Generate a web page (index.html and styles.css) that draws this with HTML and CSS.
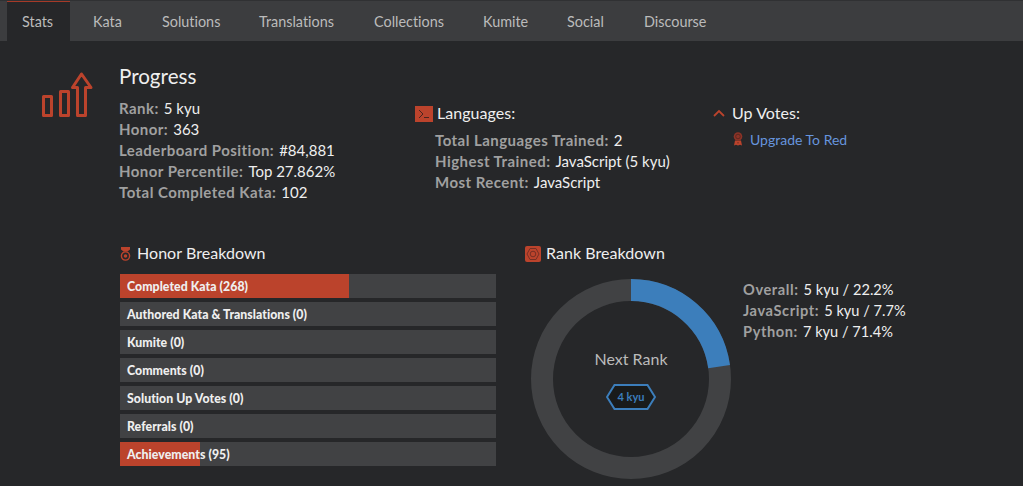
FILE: index.html
```html
<!DOCTYPE html>
<html lang="en">
<head>
<meta charset="utf-8">
<title>Stats</title>
<link rel="stylesheet" href="styles.css">
</head>
<body>
<nav class="tabs">
  <a class="tab active">Stats</a><a class="tab">Kata</a><a class="tab">Solutions</a><a class="tab">Translations</a><a class="tab">Collections</a><a class="tab">Kumite</a><a class="tab">Social</a><a class="tab">Discourse</a>
</nav>
<main class="panel">
  <svg class="progress-icon" width="54" height="48" viewBox="0 0 54 48" fill="none" stroke="#bb432c" stroke-width="3" stroke-linejoin="round">
    <path d="M3.500 26.500h8v19h-8zM20.500 21.500h8v24h-8zM37.500 45.500v-28h-5l9-13.500 9.500 13.500h-5.500v28z"/>
  </svg>
  <div class="content">
    <section class="summary">
      <div class="progress">
        <h2>Progress</h2>
        <div class="stat"><b>Rank:</b>5 kyu</div>
        <div class="stat"><b>Honor:</b>363</div>
        <div class="stat"><b>Leaderboard Position:</b>#84,881</div>
        <div class="stat"><b>Honor Percentile:</b>Top 27.862%</div>
        <div class="stat"><b>Total Completed Kata:</b>102</div>
      </div>
      <div class="languages">
        <h3><svg width="18" height="16" viewBox="0 0 18 16"><path fill="#bb432c" d="M0 0h18v16H0z"/><path fill="none" stroke="#49241f" d="M4 4l4 4-4 4M9 11.500h5"/></svg>Languages:</h3>
        <div class="indent">
          <div class="stat"><b>Total Languages Trained:</b>2</div>
          <div class="stat"><b>Highest Trained:</b>JavaScript (5 kyu)</div>
          <div class="stat"><b>Most Recent:</b>JavaScript</div>
        </div>
      </div>
      <div class="votes">
        <h3><svg width="12" height="8" viewBox="0 0 12 8"><path fill="none" stroke="#bb432c" stroke-width="1.800" d="M1 7l5-5 5 5"/></svg>Up Votes:</h3>
        <a class="upgrade"><svg width="10" height="14" viewBox="0 0 10 14"><path fill="#bb432c" d="M2 8.500h6l1 5-2-.8-2 .8-2-.8-2 .8z"/><circle cx="5" cy="4.500" r="4.300" fill="#8c3327"/><circle cx="5" cy="4.500" r="2.300" fill="none" stroke="#5d2820"/><path stroke="#6a2c22" d="M5 10v1.500"/></svg>Upgrade To Red</a>
      </div>
    </section>
    <section class="breakdowns">
      <div class="honor">
        <h3><svg width="11" height="14" viewBox="0 0 11 14"><path fill="#bb432c" d="M1 0h9v2.500L7.500 4.500h-4L1 2.500z"/><circle cx="5.500" cy="9" r="4.100" fill="none" stroke="#bb432c" stroke-width="1.400"/><circle cx="5.500" cy="9" r="1.800" fill="#bb432c"/></svg>Honor Breakdown</h3>
        <div class="bar"><div class="fill" style="width:229px"></div><span>Completed Kata (268)</span></div>
        <div class="bar"><span>Authored Kata &amp; Translations (0)</span></div>
        <div class="bar"><span>Kumite (0)</span></div>
        <div class="bar"><span>Comments (0)</span></div>
        <div class="bar"><span>Solution Up Votes (0)</span></div>
        <div class="bar"><span>Referrals (0)</span></div>
        <div class="bar"><div class="fill" style="width:80px"></div><span>Achievements (95)</span></div>
      </div>
      <div class="rank">
        <h3><svg width="16" height="16" viewBox="0 0 16 16"><rect width="16" height="16" rx="2" fill="#bb432c"/><g fill="none" stroke="#762f24"><path d="M5 2.500h6L14 8l-3 5.500H5L2 8z"/><circle cx="8" cy="8" r="2.800"/></g></svg>Rank Breakdown</h3>
        <div class="rank-body">
          <div class="chart">
            <svg class="ring" width="200" height="200" viewBox="0 0 200 200" fill="none" stroke-width="22">
              <circle cx="100" cy="100" r="89" stroke="#414244"/>
              <path stroke="#3c7ebb" d="M100 11A89 89 0 0 1 188.130 87.610"/>
            </svg>
            <div class="next">
              <div>Next Rank</div>
              <div class="badge"><svg width="50" height="26" viewBox="0 0 50 26"><path fill="#191b1b" stroke="#3c7ebb" stroke-width="2" d="M8.500 1h33L49 13l-7.500 12h-33L1 13z"/></svg><span>4 kyu</span></div>
            </div>
          </div>
          <div class="ranks">
            <div class="stat"><b>Overall:</b>5 kyu / 22.2%</div>
            <div class="stat"><b>JavaScript:</b>5 kyu / 7.7%</div>
            <div class="stat"><b>Python:</b>7 kyu / 71.4%</div>
          </div>
        </div>
      </div>
    </section>
  </div>
</main>
</body>
</html>
```
FILE: styles.css
```css
* { box-sizing: border-box; }
body {
  margin: 0;
  height: 486px;
  overflow: hidden;
  background: #262729;
  color: #efefef;
  font: 14px/21px Lato, sans-serif;
  font-variant-ligatures: none;
}
.tabs {
  display: flex;
  gap: 8px;
  height: 41px;
  padding-left: 7px;
  background: #3c3d3f;
  border-top: 1px solid #303133;
}
.tab {
  padding-left: 15px;
  border-top: 1px solid transparent;
  line-height: 40px;
  height: 40px;
  font-size: 14.400px;
  color: #bbbbbb;
}
.tab:nth-child(1) { width: 63px; }
.tab:nth-child(2) { width: 61px; }
.tab:nth-child(3) { width: 89px; }
.tab:nth-child(4) { width: 107px; }
.tab:nth-child(5) { width: 101px; }
.tab:nth-child(6) { width: 76px; }
.tab:nth-child(7) { width: 69px; }
.tab.active { background: #262729; border-top-color: #a63a28; }
.panel { display: flex; padding: 23px 0 0 40px; }
.progress-icon { margin-top: 6px; flex: none; }
.content { margin-left: 26px; width: 880px; }
h2, h3 { margin: 0; font-weight: 400; }
h2 { margin: 0 0 9px -1px; font-size: 20.600px; line-height: 24px; }
h3 { display: flex; align-items: center; font-size: 16px; letter-spacing: 0.050px; line-height: 20px; }
h3 svg { flex: none; }
.summary { display: grid; grid-template-columns: 295px 298px 1fr; height: 179px; }
.stat { height: 21px; line-height: 22px; white-space: nowrap; font-size: 15px; }
.stat b { margin-right: 5px; color: #a0a0a0; letter-spacing: 0.450px; }
.progress .stat { margin-left: -1px; }
.languages, .votes { padding-top: 39px; }
.languages h3 { gap: 4px; }
.languages h3 svg { margin-top: 1px; }
.indent { padding: 6px 0 0 20px; }
.votes h3 { gap: 7px; }
.upgrade { display: flex; align-items: center; gap: 7px; margin: 6px 0 0 20px; color: #6795de; }
.upgrade svg { margin-top: -2px; }
.breakdowns { display: grid; grid-template-columns: 376px 1fr; column-gap: 29px; }
.honor h3 { gap: 6px; margin-bottom: 11px; }
.honor h3 svg { margin-top: 1px; }
.bar { position: relative; height: 24px; margin-bottom: 4px; background: #414244; }
.fill { height: 100%; background: #bb432c; }
.bar span {
  position: absolute;
  left: 7px;
  top: 0;
  line-height: 25px;
  font-size: 12.300px;
  font-weight: 900;
  letter-spacing: 0.050px;
}
.rank h3 { gap: 5px; }
.rank h3 svg { margin-top: 1px; }
.rank-body { display: flex; padding: 16px 0 0 6px; }
.chart { position: relative; width: 200px; height: 200px; }
.ring { display: block; }
.next {
  position: absolute;
  inset: 0;
  padding-top: 69px;
  text-align: center;
  font-size: 16px;
  color: #bbbbbb;
}
.badge { position: relative; width: 50px; height: 26px; margin: 15px auto 0; }
.badge svg { display: block; }
.badge span {
  position: absolute;
  inset: 0;
  color: #3c7ebb;
  font-size: 11px;
  font-weight: 700;
  line-height: 26px;
}
.ranks { margin-left: 12px; }
.ranks .stat { font-size: 14.600px; }
.ranks b { letter-spacing: 0.600px; }
```
